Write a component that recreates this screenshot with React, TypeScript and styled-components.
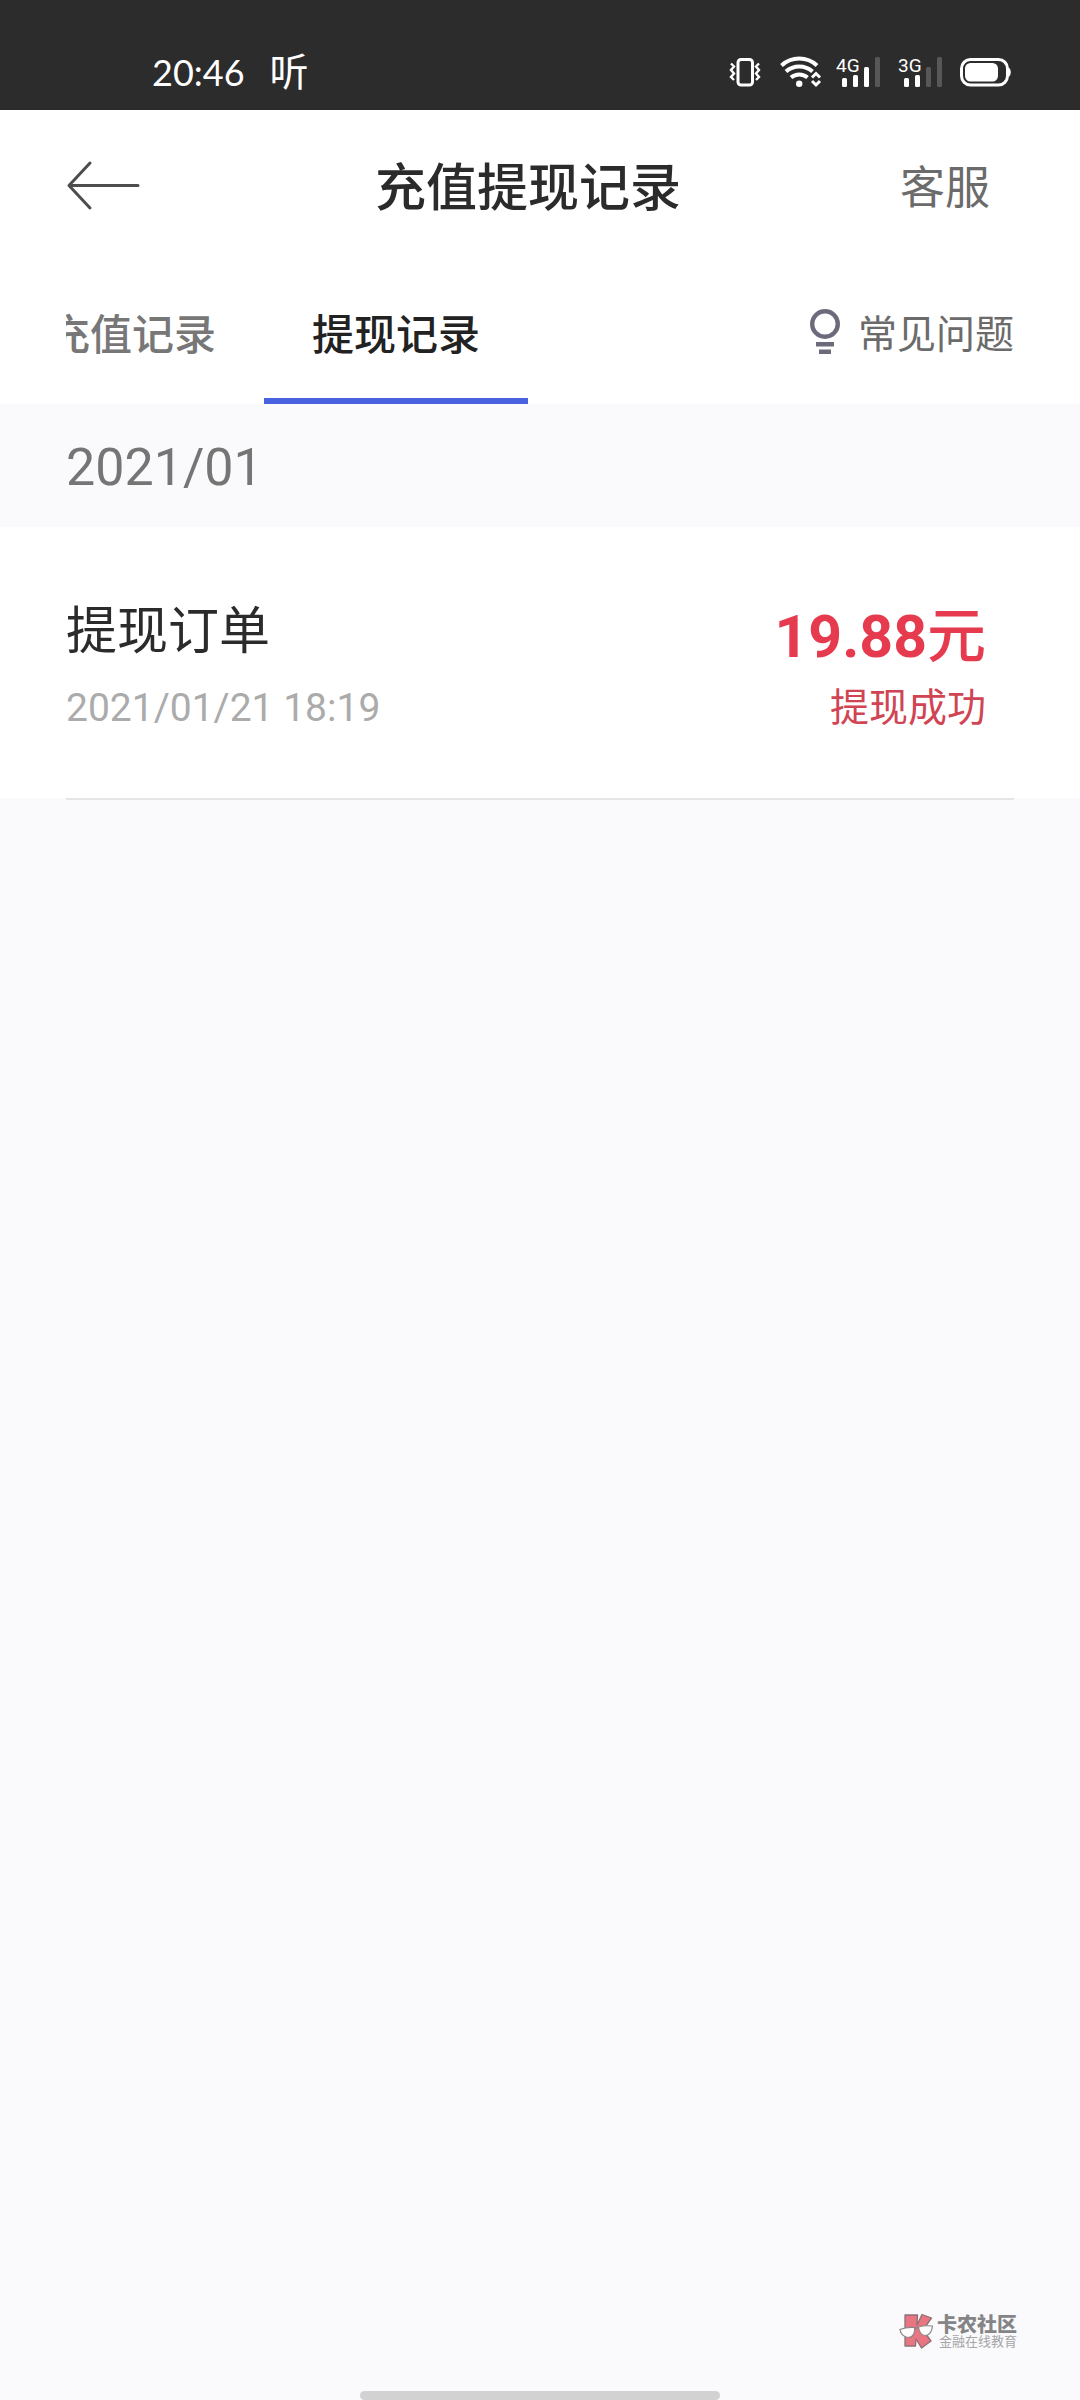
import React from "react";
import styled, { createGlobalStyle } from "styled-components";

const GlobalStyle = createGlobalStyle`
  *, *::before, *::after { box-sizing: border-box; }
  body {
    margin: 0;
    background: #fafafc;
    font-family: Roboto, "Noto Sans CJK SC", sans-serif;
    color: #2b2b2b;
  }
  h1, h2, h3, p { margin: 0; font-weight: 400; }
  button {
    padding: 0;
    border: 0;
    background: none;
    font-family: inherit;
    cursor: pointer;
  }
  a { color: inherit; text-decoration: none; }
  svg { display: block; flex: none; overflow: visible; }
`;

const Page = styled.div`
  display: flex;
  flex-direction: column;
  min-height: 100vh;
`;

const StatusBar = styled.div`
  display: flex;
  align-items: center;
  justify-content: space-between;
  height: 110px;
  padding: 34px 69px 0 152px;
  background: #2c2c2c;
  color: #fff;
`;

const StatusGroup = styled.div<{ $gap: number }>`
  display: flex;
  align-items: center;
  gap: ${(p) => p.$gap}px;
`;

const Clock = styled.time`
  font: 400 36px/40px Lato, sans-serif;
`;

const ListenMark = styled.span`
  padding-top: 2px;
  font-size: 39px;
  line-height: 40px;
`;

const Header = styled.header`
  display: grid;
  grid-template-columns: 1fr auto 1fr;
  align-items: center;
  height: 154px;
  padding: 0 90px 0 66px;
  background: #fff;
`;

const BackButton = styled.button`
  justify-self: start;
`;

const Title = styled.h1`
  padding-top: 4px;
  font-size: 51px;
  line-height: 60px;
  font-weight: 500;
`;

const ServiceButton = styled.button`
  justify-self: end;
  padding-top: 4px;
  font-size: 45px;
  line-height: 60px;
  color: #6b6b6b;
`;

const TabBar = styled.nav`
  display: flex;
  align-items: center;
  justify-content: space-between;
  height: 140px;
  padding: 0 66px;
  background: #fff;
`;

/* The strip is scrolled by one side padding, so its first tab is cut off. */
const TabStrip = styled.div`
  display: flex;
  align-self: stretch;
  overflow: hidden;

  & > :first-child { margin-left: -66px; }
`;

const Tab = styled.button<{ $active?: boolean }>`
  padding: 0 48px;
  border-bottom: 6px solid ${(p) => (p.$active ? "#4a62e0" : "transparent")};
  font-size: 42px;
  font-weight: 500;
  white-space: nowrap;
  color: ${(p) => (p.$active ? "#222" : "#777")};
`;

const FaqLink = styled.a`
  display: flex;
  align-items: center;
  gap: 18px;
  font-size: 39px;
  line-height: 54px;
  color: #6b6b6b;
`;

const FaqLabel = styled.span`
  padding-top: 2px;
`;

const MonthHeading = styled.h2`
  padding: 34px 66px 29px;
  font-size: 52px;
  line-height: 60px;
  color: #757575;
`;

const Record = styled.article`
  display: flex;
  justify-content: space-between;
  height: 271px;
  padding: 71px 94px 63px 66px;
  background: #fff;
`;

const RecordColumn = styled.div<{ $end?: boolean }>`
  display: flex;
  flex-direction: column;
  justify-content: space-between;
  align-items: ${(p) => (p.$end ? "flex-end" : "flex-start")};
`;

const RecordTitle = styled.h3`
  font-size: 51px;
  line-height: 68px;
`;

const RecordTime = styled.time`
  font-size: 39px;
  line-height: 54px;
  color: #ababab;
`;

const Amount = styled.p`
  font-size: 59px;
  line-height: 78px;
  font-weight: 700;
  color: #e63b4e;
`;

const Currency = styled.span`
  font-weight: 500;
`;

const RecordState = styled.p`
  font-size: 39px;
  line-height: 54px;
  color: #d04453;
`;

const Divider = styled.hr`
  width: auto;
  height: 2px;
  margin: 0 66px;
  border: 0;
  background: #e6e6e8;
`;

const Footer = styled.footer`
  display: flex;
  flex-direction: column;
  gap: 42px;
  margin-top: auto;
`;

const Community = styled.div`
  display: flex;
  align-items: center;
  align-self: flex-end;
  gap: 3px;
  margin-right: 63px;
`;

const CommunityName = styled.p`
  padding-top: 2px;
  font-size: 20px;
  line-height: 20px;
  font-weight: 900;
  color: #858487;
`;

const CommunitySlogan = styled.p`
  font-size: 13px;
  line-height: 14px;
  text-align: right;
  color: #a5a5a8;
`;

const HomeIndicator = styled.div`
  align-self: center;
  width: 360px;
  height: 9px;
  border-radius: 5px;
  background: #d2d2d3;
`;

const VibrateIcon = () => (
  <svg width="32" height="30" viewBox="0 0 32 30" fill="none" stroke="#fff" aria-hidden="true">
    <rect x="9" y="2.500" width="14.500" height="25.500" rx="3" strokeWidth="3" />
    <path d="M2 6.500l3 3-3 3.500 3 3.500-3 3.500 3 3M30 6.500l-3 3 3 3.500-3 3.500 3 3.500-3 3" strokeWidth="2.400" />
  </svg>
);

const WifiIcon = () => (
  <svg width="41" height="30" viewBox="0 0 41 30" fill="none" stroke="#fff" aria-hidden="true">
    <path d="M1.500 8.500a26 26 0 0 1 35.500 0M6 14.500a20 20 0 0 1 26.500 0M11 20.500a12.500 12.500 0 0 1 16.500 0" strokeWidth="4" />
    <circle cx="19.200" cy="26.700" r="3.200" fill="#fff" stroke="none" />
    <path d="M32 20.500l4-4 4 4M32 24l4 4 4-4" strokeWidth="3" />
  </svg>
);

const BARS = [
  { x: 6, height: 9 },
  { x: 17, height: 12 },
  { x: 28, height: 20 },
  { x: 39, height: 30 },
];

const SignalIcon = ({ label, level }: { label: string; level: number }) => (
  <svg width="44" height="30" viewBox="0 0 44 30" role="img" aria-label={`${label} signal`}>
    {BARS.map((bar, i) => (
      <rect
        key={bar.x}
        x={bar.x}
        y={30 - bar.height}
        width="5"
        height={bar.height}
        rx="1.500"
        fill={i < level ? "#fff" : "#575757"}
      />
    ))}
    <text x="0" y="15" fill="#fff" fontSize="19" fontFamily="Roboto, sans-serif">
      {label}
    </text>
  </svg>
);

const BatteryIcon = () => (
  <svg width="51" height="30" viewBox="0 0 51 30" fill="none" aria-hidden="true">
    <rect x="1.500" y="2.500" width="46" height="25.500" rx="9" stroke="#fff" strokeWidth="3" />
    <rect x="5" y="6" width="33" height="18.500" rx="5.500" fill="#fff" />
    <path d="M48.500 10.500c3 1.500 3 8 0 9.500z" fill="#fff" />
  </svg>
);

const BackIcon = () => (
  <svg width="75" height="50" viewBox="0 0 75 50" fill="none" stroke="#4d4d4d" strokeWidth="3" strokeLinecap="round" strokeLinejoin="round" aria-hidden="true">
    <path d="M24 1L3 23.500 24 46M3 23.500h69" />
  </svg>
);

const BulbIcon = () => (
  <svg width="30" height="50" viewBox="0 0 30 50" fill="none" aria-hidden="true">
    <circle cx="15" cy="15" r="12.800" stroke="#6c6b7b" strokeWidth="4.400" />
    <path d="M6 33h18v4.500H6zM9 40.500h12V45H9z" fill="#6c6b7b" />
  </svg>
);

const CommunityLogo = () => (
  <svg width="35" height="36" viewBox="0 0 35 36" aria-hidden="true">
    <path
      d="M6 2h12.500l-.5 10L23 1.500 32.500 5 24 17l8 11-9.500 7L17 26l-.5 7H6z"
      fill="#e87581"
      stroke="#8b7175"
      strokeWidth="1.300"
      strokeLinejoin="round"
    />
    <path
      d="M1 16.500c5-2 10-2.500 14.500-2 1 5-1.500 10-6 10S1.500 21 1 16.500zM19.500 14c4.500-1.500 9-1.500 14-1-.5 5-3 9.500-7 9.500s-6.500-4-7-8.500z"
      fill="#fdfcfd"
      stroke="#8d8587"
      strokeWidth="1.200"
    />
    <path d="M15.500 15.500l4-1" stroke="#8d8587" strokeWidth="1.500" />
  </svg>
);

export default function App() {
  return (
    <Page>
      <GlobalStyle />
      <StatusBar>
        <StatusGroup $gap={25}>
          <Clock>20:46</Clock>
          <ListenMark>听</ListenMark>
        </StatusGroup>
        <StatusGroup $gap={15}>
          <StatusGroup $gap={19}>
            <VibrateIcon />
            <WifiIcon />
          </StatusGroup>
          <StatusGroup $gap={18}>
            <SignalIcon label="4G" level={3} />
            <SignalIcon label="3G" level={2} />
            <BatteryIcon />
          </StatusGroup>
        </StatusGroup>
      </StatusBar>

      <Header>
        <BackButton type="button" aria-label="返回">
          <BackIcon />
        </BackButton>
        <Title>充值提现记录</Title>
        <ServiceButton type="button">客服</ServiceButton>
      </Header>

      <TabBar>
        <TabStrip>
          <Tab type="button">充值记录</Tab>
          <Tab type="button" $active aria-current="page">
            提现记录
          </Tab>
        </TabStrip>
        <FaqLink href="#faq">
          <BulbIcon />
          <FaqLabel>常见问题</FaqLabel>
        </FaqLink>
      </TabBar>

      <main>
        <MonthHeading>2021/01</MonthHeading>
        <Record>
          <RecordColumn>
            <RecordTitle>提现订单</RecordTitle>
            <RecordTime dateTime="2021-01-21T18:19">2021/01/21 18:19</RecordTime>
          </RecordColumn>
          <RecordColumn $end>
            <Amount>
              19.88<Currency>元</Currency>
            </Amount>
            <RecordState>提现成功</RecordState>
          </RecordColumn>
        </Record>
        <Divider />
      </main>

      <Footer>
        <Community>
          <CommunityLogo />
          <div>
            <CommunityName>卡农社区</CommunityName>
            <CommunitySlogan>金融在线教育</CommunitySlogan>
          </div>
        </Community>
        <HomeIndicator />
      </Footer>
    </Page>
  );
}
